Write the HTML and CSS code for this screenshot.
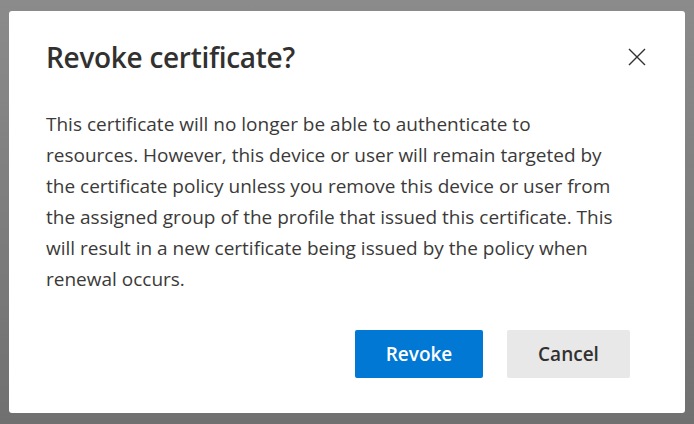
FILE: index.html
```html
<!DOCTYPE html>
<html lang="en">
<head>
  <meta charset="UTF-8" />
  <title>Revoke certificate</title>
  <link rel="stylesheet" href="styles.css">
</head>
<body>
  <div class="backdrop">
    <div class="dialog">
      <div class="dialog-header">
        <h1>Revoke certificate?</h1>
        <button class="close" aria-label="Close">
          <svg width="18" height="18" viewBox="0 0 18 18"><path d="M1 1L17 17M17 1L1 17" stroke="#323130" stroke-width="1.4" fill="none"/></svg>
        </button>
      </div>
      <p class="message">This certificate will no longer be able to authenticate to resources. However, this device or user will remain targeted by the certificate policy unless you remove this device or user from the assigned group of the profile that issued this certificate. This will result in a new certificate being issued by the policy when renewal occurs.</p>
      <div class="actions">
        <button class="btn btn-primary">Revoke</button>
        <button class="btn btn-default">Cancel</button>
      </div>
    </div>
  </div>
</body>
</html>
```

FILE: styles.css
```css
body {
  margin: 0;
  font-family: "Open Sans", "Noto Sans", sans-serif;
  background: #7d7d7d;
}
.backdrop {
  height: 424px;
  padding: 11px 9px;
  box-sizing: border-box;
  background: linear-gradient(#8b8b8b, #707070);
}
.dialog {
  height: 402px;
  background: #fff;
  border-radius: 3px;
  box-sizing: border-box;
  padding: 26px 37px 0 37px;
}
.dialog-header {
  display: flex;
  justify-content: space-between;
  align-items: center;
  height: 40px;
}
h1 {
  margin: 0;
  font-size: 28px;
  font-weight: 600;
  color: #323130;
  letter-spacing: -0.3px;
}
.close {
  background: none;
  border: none;
  padding: 0;
  margin-right: 2px;
  display: flex;
}
.message {
  margin: 32px 0 0 0;
  max-width: 580px;
  font-size: 19px;
  line-height: 31px;
  color: #3b3a39;
}
.actions {
  display: flex;
  justify-content: flex-end;
  gap: 24px;
  margin-top: 35px;
  padding-right: 18px;
}
.btn {
  height: 48px;
  border: none;
  border-radius: 2px;
  font-family: inherit;
  font-size: 19px;
  font-weight: 600;
}
.btn-primary {
  width: 128px;
  background: #0078d4;
  color: #fff;
}
.btn-default {
  width: 123px;
  background: #e8e8e8;
  color: #323130;
}
```
